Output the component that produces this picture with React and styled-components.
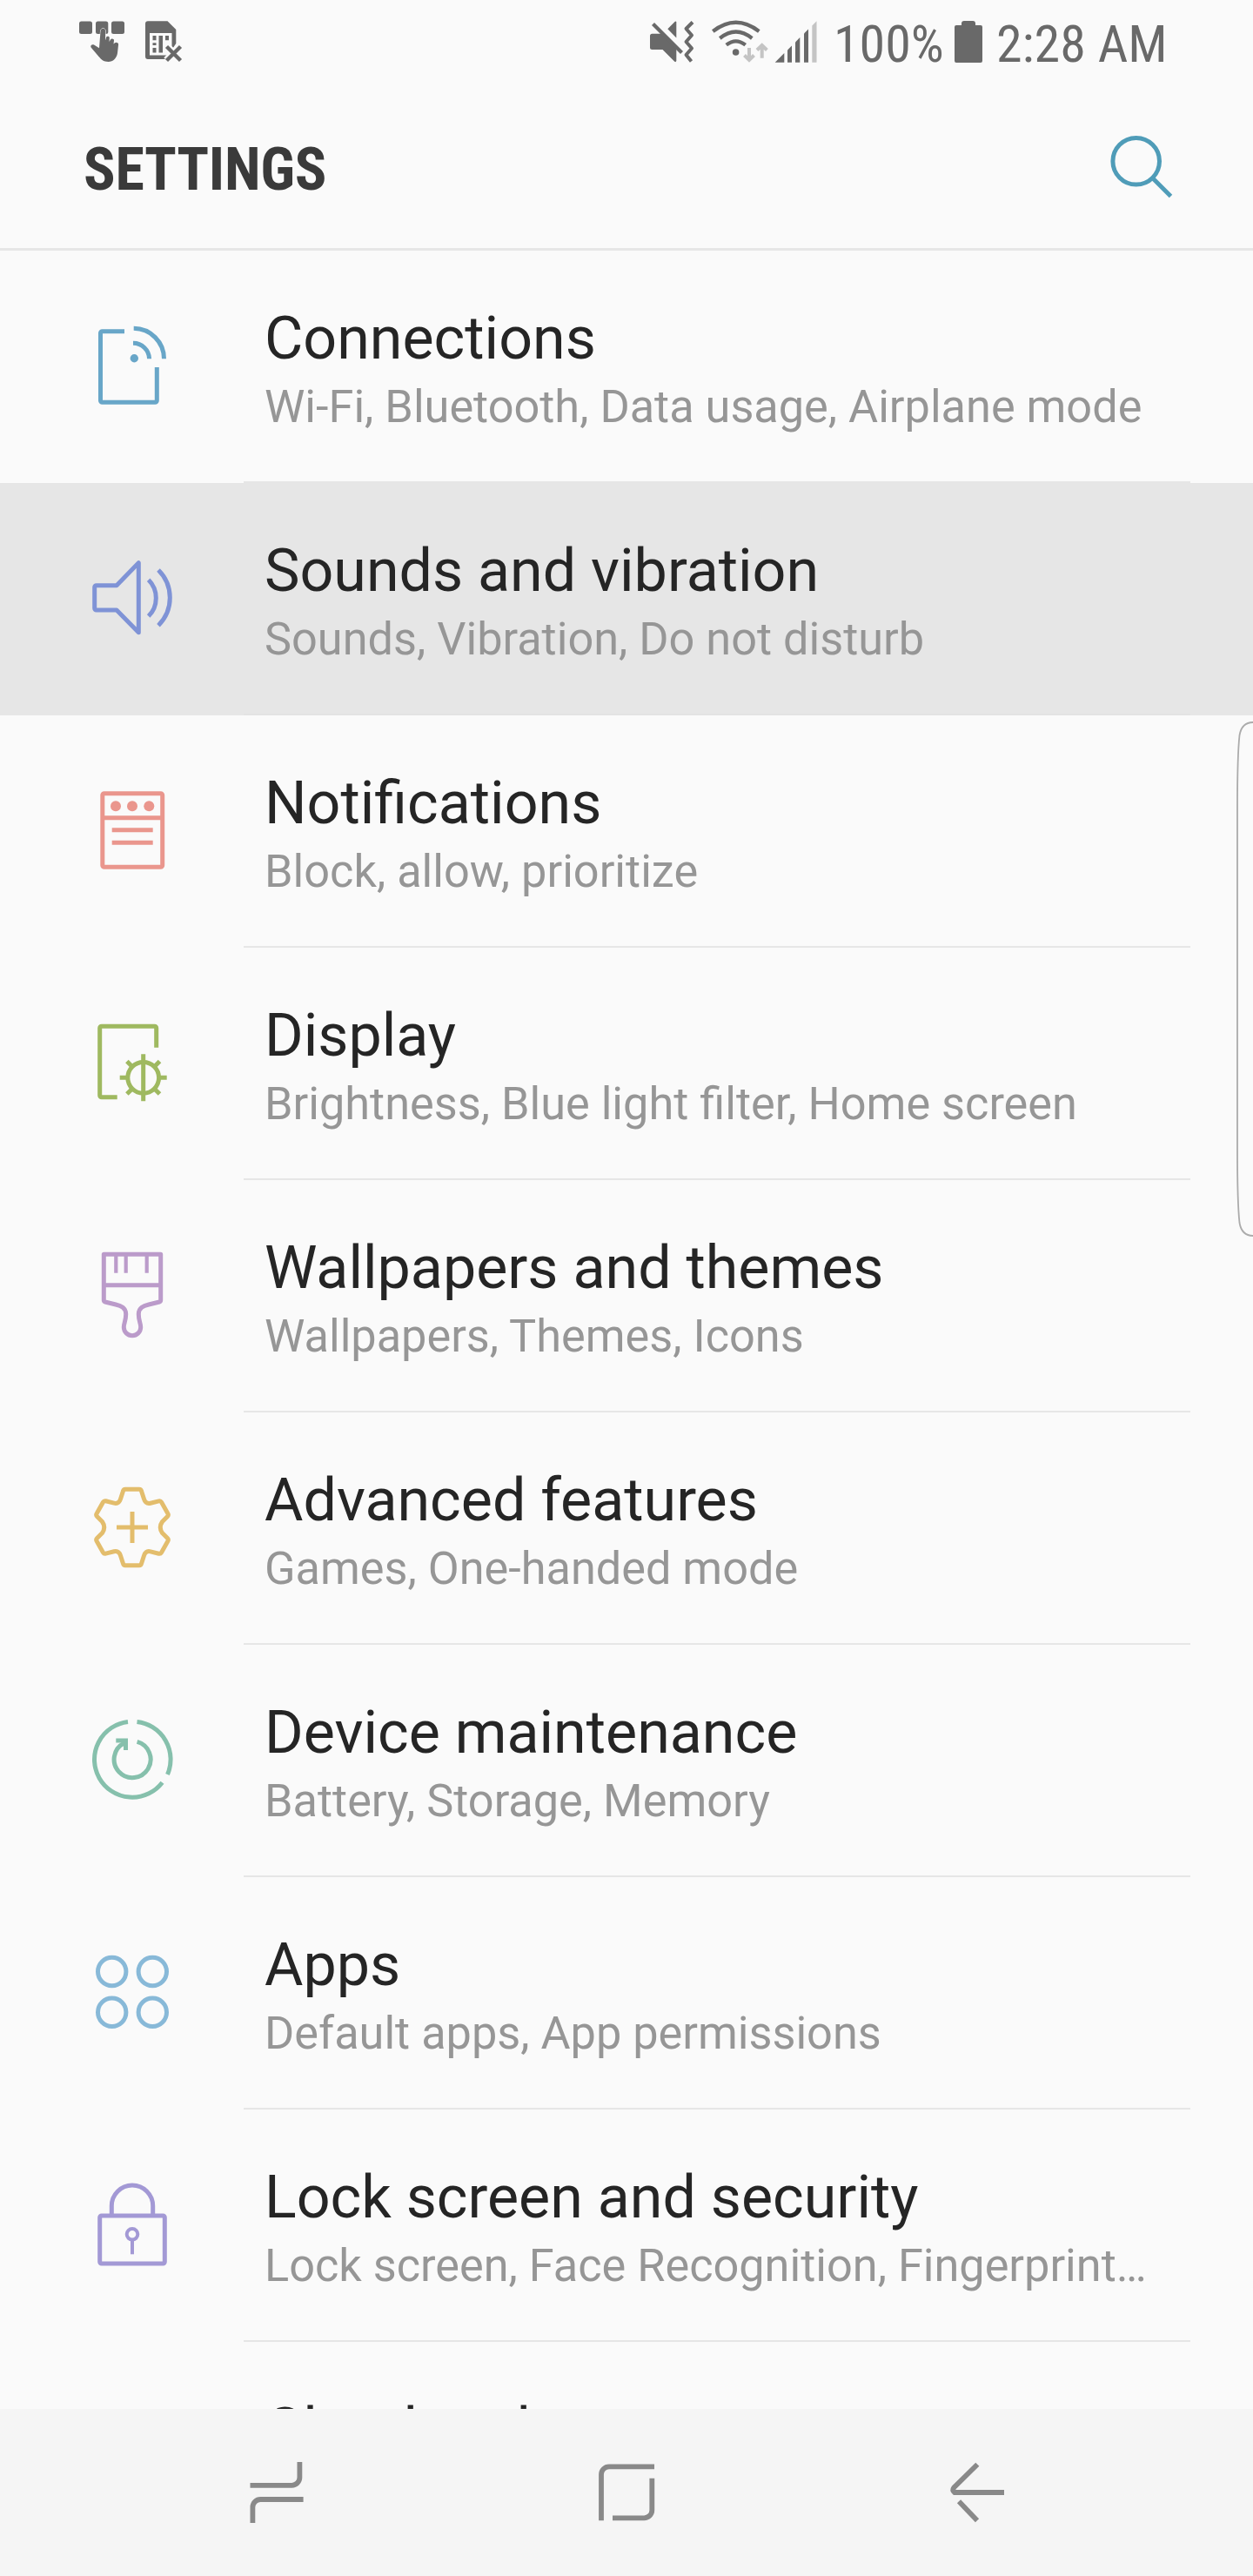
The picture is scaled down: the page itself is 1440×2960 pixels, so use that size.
import React from "react";
import styled, { createGlobalStyle } from "styled-components";

const GlobalStyle = createGlobalStyle`
  * {
    box-sizing: border-box;
  }

  body {
    margin: 0;
    background: #fafafa;
    font-family: Roboto, "Liberation Sans", sans-serif;
  }
`;

const ConnectionsIcon = () => (
  <>
    <path d="M43 12.8H17.5a2 2 0 0 0-2 2V92.3a2 2 0 0 0 2 2H78.3a2 2 0 0 0 2-2V54" />
    <path d="M53 26.3A18.5 18.5 0 0 1 71.6 44.3" />
    <path d="M53.7 9.3A35 35 0 0 1 88.5 44.3" />
    <circle cx="54.3" cy="43.7" r="4.7" fill="currentColor" stroke="none" />
  </>
);

const SoundIcon = () => (
  <>
    <path d="M10.7 37.7H34L59.3 11.7V91.7L34 66H10.7a2 2 0 0 1-2-2V39.7a2 2 0 0 1 2-2z" />
    <path d="M70.7 31.3A29.6 29.6 0 0 1 70.7 73" />
    <path d="M82 20A44.8 44.8 0 0 1 82 83.7" />
  </>
);

const NotificationsIcon = () => (
  <>
    <rect x="17.8" y="9.8" width="68.9" height="84.4" rx="2" />
    <path d="M17.8 37.7H86.7M28.7 51.7H75.7M28.7 66.3H75.7" />
    <g fill="currentColor" stroke="none">
      <circle cx="33" cy="24.3" r="6" />
      <circle cx="52" cy="24.3" r="6" />
      <circle cx="71.3" cy="24.3" r="6" />
    </g>
  </>
);

const DisplayIcon = () => (
  <>
    <path d="M79.7 34.7V12.3a2 2 0 0 0-2-2H16.7a2 2 0 0 0-2 2V89.7a2 2 0 0 0 2 2H34.7" />
    <circle cx="64.7" cy="69.3" r="17.9" />
    <path d="M64.7 42.3V96.3M37.7 69.3H47M82.4 69.3H91.7" />
    <path d="M45.9 50.5L52.3 56.9M83.5 50.5L77.1 56.9M45.9 88.1L52.3 81.7M83.5 88.1L77.1 81.7" />
  </>
);

const BrushIcon = () => (
  <>
    <path d="M19.3 5.3H84.7V58Q84.7 59.6 83.2 60L71 63C65 64.5 59.3 66.5 59.3 74C59.3 82 61.7 84 61.7 89A9.7 9.7 0 0 1 42.3 89C42.3 84 44.7 82 44.7 74C44.7 66.5 39 64.5 33 63L20.8 60Q19.3 59.6 19.3 58z" />
    <path d="M19.3 40.7H84.7" />
    <path d="M33.3 5V26.7M44.7 5V26.7M68.7 5V26.7" strokeWidth="4.2" />
  </>
);

const gearHalf =
  "M52 8.3H60Q62 8.3 62.5 10.3L65.5 19.5Q67.5 25.5 73 24.2L82.5 21.8Q84.5 21.3 85.5 23L92.8 36Q94 38 92.5 39.5L86.5 45.5Q82 52 86.5 58.5L92.5 64.5Q94 66 92.8 68L85.5 81Q84.5 82.7 82.5 82.2L73 79.8Q67.5 78.5 65.5 84.5L62.5 93.7Q62 95.7 60 95.7H52";

const AdvancedIcon = () => (
  <>
    <path d={gearHalf} />
    <path d={gearHalf} transform="rotate(180 52 52)" />
    <path d="M34 52H70M52 34V70" />
  </>
);

const MaintenanceIcon = () => (
  <>
    <path d="M57.5 8.5A43.5 43.5 0 0 1 92.5 69" />
    <path d="M86.5 78.2A43.5 43.5 0 1 1 47 8.5" />
    <path d="M57.6 31.4A21 21 0 1 1 42.5 33" />
    <path d="M33.3 29.9H44.5V41" strokeLinejoin="miter" />
  </>
);

const AppsIcon = () => (
  <>
    <circle cx="28.7" cy="28.5" r="16.2" />
    <circle cx="75.3" cy="28.5" r="16.2" />
    <circle cx="28.7" cy="75.3" r="16.2" />
    <circle cx="75.3" cy="75.3" r="16.2" />
  </>
);

const LockIcon = () => (
  <>
    <rect x="14.7" y="42" width="74.6" height="55" rx="2" />
    <path d="M28.3 42V30.7A23.7 23.7 0 0 1 75.7 30.7V42" />
    <circle cx="52" cy="63.3" r="6.3" strokeWidth="4" />
    <path d="M52 70V86.3" strokeWidth="4" />
  </>
);

const data = [
  {
    id: 1,
    title: "Connections",
    description: "Wi-Fi, Bluetooth, Data usage, Airplane mode",
    color: "#68a6c8",
    icon: ConnectionsIcon,
  },
  {
    id: 2,
    title: "Sounds and vibration",
    description: "Sounds, Vibration, Do not disturb",
    color: "#7f93d6",
    icon: SoundIcon,
    active: true,
  },
  {
    id: 3,
    title: "Notifications",
    description: "Block, allow, prioritize",
    color: "#ea968d",
    icon: NotificationsIcon,
  },
  {
    id: 4,
    title: "Display",
    description: "Brightness, Blue light filter, Home screen",
    color: "#9fb960",
    icon: DisplayIcon,
  },
  {
    id: 5,
    title: "Wallpapers and themes",
    description: "Wallpapers, Themes, Icons",
    color: "#bb9bca",
    icon: BrushIcon,
  },
  {
    id: 6,
    title: "Advanced features",
    description: "Games, One-handed mode",
    color: "#e3bd6c",
    icon: AdvancedIcon,
  },
  {
    id: 7,
    title: "Device maintenance",
    description: "Battery, Storage, Memory",
    color: "#86c0ac",
    icon: MaintenanceIcon,
  },
  {
    id: 8,
    title: "Apps",
    description: "Default apps, App permissions",
    color: "#88b9d8",
    icon: AppsIcon,
  },
  {
    id: 9,
    title: "Lock screen and security",
    description: "Lock screen, Face Recognition, Fingerprint…",
    color: "#a399d5",
    icon: LockIcon,
  },
  {
    id: 10,
    title: "Cloud and accounts",
    color: "#68a6c8",
  },
];

const StatusIcons = () => (
  <StatusBar>
    <Glyph $width={54} viewBox="90 0 54 96">
      <rect x="91" y="24.5" width="15" height="14.5" rx="2.5" />
      <rect x="110" y="24.5" width="14.3" height="14.5" rx="2.5" />
      <rect x="128" y="24.5" width="15" height="14.5" rx="2.5" />
      <path
        d="M115.5 36C115.6 31.5 121.3 31.5 121.2 36L121 46.5L122.2 42.5C123 41 126 41.5 125.8 43.5L125.5 48L127 45.5C128 43.8 131.3 44.5 131 46.5L130.5 50.5L132 49.2C133.5 48 136.3 49 136.1 51L135 61C134 67 130 71 124.5 71C119 71 116 68 113.5 65L104.6 54.5C103.5 52.5 105.5 50.5 108 51.5L114 55.3z"
        stroke="#fafafa"
        strokeWidth="1"
        paintOrder="stroke"
      />
    </Glyph>
    <Glyph $width={44} $gap={22} viewBox="166 0 44 96">
      <path
        fillRule="evenodd"
        d="M170 24.3H192.5L202.3 34V50L190 68H170Q167 68 167 65V27.3Q167 24.3 170 24.3zM172 38V63.5H197.5V38z"
      />
      <path d="M175.5 41h4v5.3h-4zM182.5 41h4.5v19.5h-4.5zM190 41h4v5.3h-4zM175.5 49.3h4v2.7h-4zM175.5 55h4v5.5h-4z" />
      <path
        d="M191.5 53.5L207.5 69.5M207.5 53.5L191.5 69.5"
        stroke="#fafafa"
        strokeWidth="9"
      />
      <path
        d="M191.5 53.5L207.5 69.5M207.5 53.5L191.5 69.5"
        stroke="#696969"
        strokeWidth="4.4"
      />
    </Glyph>
    <Spacer />
    <Glyph $width={52} viewBox="746 0 52 96">
      <path d="M777.3 25V43.5L767.3 33.2L775 25.5Q776.5 24 777.3 25z" />
      <path d="M749.5 38.7H760L777.3 56V70Q776.5 72 775 70.5L761.5 57H749.5Q747 57 747 54.5V41.5Q747 38.7 749.5 38.7z" />
      <path
        d="M750.5 27.5L783.5 60.5"
        stroke="#696969"
        strokeWidth="4.2"
        fill="none"
      />
      <path
        d="M796 25.5L788.5 33L795 40.5L788.5 48L795 55.5L788.5 63L794.5 70.5"
        stroke="#696969"
        strokeWidth="4"
        strokeLinejoin="round"
        fill="none"
      />
    </Glyph>
    <Glyph $width={66} $gap={20} viewBox="818 0 66 96">
      <g fill="none" stroke="#696969" strokeWidth="4.2">
        <path d="M819.3 36Q845.7 15.5 872.3 36" />
        <path d="M827.3 44Q845.7 29 864.3 44" />
        <path d="M834.7 51.7Q845.7 43 856.7 51.7" />
      </g>
      <circle cx="845.6" cy="60" r="3.8" />
      <g fill="none" stroke="#c4c4c4" strokeWidth="4">
        <path d="M861 55V69M855.5 63.5L861 69L866.5 63.5" />
        <path d="M875.7 66.7V52M870 57.5L875.7 52L881.4 57.5" />
      </g>
    </Glyph>
    <Glyph $width={50} $gap={6} viewBox="890 0 50 96">
      <path d="M890.7 71.7L901.3 61V71.7z" />
      <path d="M905 57.5L910 52.5V71.7H905z" />
      <path d="M914 48.5L919.3 43V71.7H914z" />
      <path d="M924 38.5L929 33.5V71.7H924z" />
      <path d="M933.3 29.5L938.5 24.2V71.7H933.3z" fill="#c4c4c4" />
    </Glyph>
    <StatusText $gap={18} $width={139}>
      100%
    </StatusText>
    <Glyph $width={32} viewBox="1097 0 32 96">
      <path d="M1105 29V27Q1105 24 1108 24H1118Q1121 24 1121 27V29H1127Q1129 29 1129 31V70Q1129 72 1127 72H1099Q1097 72 1097 70V31Q1097 29 1099 29z" />
    </Glyph>
    <StatusText $gap={16} $width={197}>
      2:28 AM
    </StatusText>
  </StatusBar>
);

const App = () => {
  return (
    <Screen>
      <GlobalStyle />
      <StatusIcons />

      <Header>
        <Heading>SETTINGS</Heading>
        <SearchIcon viewBox="0 0 80 80">
          <circle cx="33.7" cy="30.3" r="26.8" />
          <path d="M53 50L73.5 70.5" />
        </SearchIcon>
      </Header>

      <List>
        {data.map(({ icon: Icon, ...props }) => (
          <Row key={props.id} $active={props.active}>
            <RowIcon viewBox="0 0 104 104" $color={props.color}>
              {Icon && <Icon />}
            </RowIcon>
            <Content $active={props.active}>
              <Title>{props.title}</Title>
              <Desc>{props.description}</Desc>
            </Content>
          </Row>
        ))}
      </List>

      <NavBar>
        <NavIcon viewBox="0 0 80 80">
          <path d="M9.5 31.8H57.4a9 9 0 0 0 9-9V5" />
          <path d="M70.6 48H21.4a9 9 0 0 0-9 9V75" />
        </NavIcon>
        <NavIcon viewBox="0 0 80 80">
          <path d="M72 10.3H20a9 9 0 0 0-9 9V72.3" />
          <path d="M69.3 23.7V60.3a9 9 0 0 1-9 9H24" />
        </NavIcon>
        <NavIcon viewBox="0 0 80 80">
          <path d="M41.3 7.8L14.2 34.5Q12 37.5 15 40H72" />
          <path d="M20 50.3L41 72.3" />
        </NavIcon>
      </NavBar>

      {/* edge panel handle */}
      <EdgeHandle viewBox="0 0 19 592">
        <path d="M19 1C9 1 5 7 3.5 16C1.5 34 1 60 1 100V492C1 532 1.5 558 3.5 576C5 585 9 591 19 591" />
      </EdgeHandle>
    </Screen>
  );
};

export default App;

const Screen = styled.div`
  position: relative;
  display: flex;
  flex-direction: column;
  width: 1440px;
  height: 2960px;
  overflow: hidden;
  background: #fafafa;
`;

const StatusBar = styled.div`
  display: flex;
  flex: none;
  height: 96px;
  padding: 0 98px 0 90px;
`;

const Spacer = styled.div`
  flex: 1;
`;

const Glyph = styled.svg`
  flex: none;
  width: ${(props) => props.$width}px;
  height: 96px;
  margin-left: ${(props) => props.$gap || 0}px;
  fill: #696969;
`;

const StatusText = styled.div`
  flex: none;
  width: ${(props) => props.$width}px;
  margin: 16px 0 0 ${(props) => props.$gap}px;
  font-size: 60px;
  line-height: 70px;
  font-stretch: 75%;
  white-space: nowrap;
  color: #696969;
`;

const Header = styled.div`
  display: flex;
  flex: none;
  align-items: center;
  justify-content: space-between;
  height: 192px;
  padding: 9px 88px 0 96px;
  border-bottom: 3px solid #e6e6e6;
`;

const Heading = styled.div`
  font-size: 68px;
  line-height: 80px;
  font-weight: bold;
  font-stretch: 75%;
  letter-spacing: -0.3px;
  color: #3a3a3a;
`;

const SearchIcon = styled.svg`
  width: 80px;
  height: 80px;
  fill: none;
  stroke: #4f9cb8;
  stroke-width: 5;
`;

const List = styled.div`
  flex: 1;
  min-height: 0;
  overflow: hidden;
`;

const Row = styled.div`
  display: flex;
  height: 267px;
  padding: 0 72px 0 100px;
  background: ${(props) => (props.$active ? "#e6e6e6" : "transparent")};
`;

const RowIcon = styled.svg`
  flex: none;
  width: 104px;
  height: 104px;
  margin: 80px 76px 0 0;
  color: ${(props) => props.$color};
  fill: none;
  stroke: currentColor;
  stroke-width: 5;
  stroke-linejoin: round;
`;

const Content = styled.div`
  flex: 1;
  min-width: 0;
  padding: 61px 0 0 24px;
  border-bottom: 2px solid ${(props) => (props.$active ? "#e3e3e3" : "#e6e6e6")};
  white-space: nowrap;
`;

const Title = styled.div`
  font-size: 68.15px;
  line-height: 80px;
  color: #252525;
`;

const Desc = styled.div`
  margin-top: 9px;
  font-size: 52.25px;
  line-height: 60px;
  color: #969696;
`;

const NavBar = styled.div`
  display: flex;
  flex: none;
  align-items: center;
  justify-content: space-between;
  height: 192px;
  padding: 0 278px;
  background: #f5f5f5;
`;

const NavIcon = styled.svg`
  width: 80px;
  height: 80px;
  fill: none;
  stroke: #898989;
  stroke-width: 5.8;
`;

const EdgeHandle = styled.svg`
  position: absolute;
  top: 829px;
  right: 0;
  width: 19px;
  height: 592px;
  fill: #fafafa;
  stroke: #ababab;
  stroke-width: 1.8;
`;
